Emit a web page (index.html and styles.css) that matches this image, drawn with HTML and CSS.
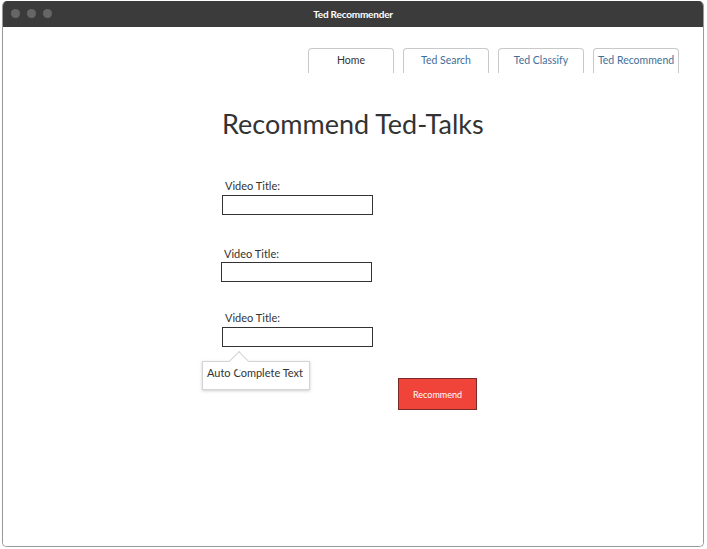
FILE: index.html
```html
<!DOCTYPE html>
<html>
<head>
<meta charset="utf-8">
<link rel="stylesheet" href="styles.css">
</head>
<body>
<div class="window">
  <div class="titlebar">
    <div class="dots"><span class="dot"></span><span class="dot"></span><span class="dot"></span></div>
    <div class="title">Ted Recommender</div>
  </div>
  <div class="content">
    <nav class="tabs">
      <div class="tab active">Home</div>
      <div class="tab">Ted Search</div>
      <div class="tab">Ted Classify</div>
      <div class="tab">Ted Recommend</div>
    </nav>
    <main class="form">
      <h1 class="heading">Recommend Ted-Talks</h1>
      <div class="field f1">
        <label class="label">Video Title:</label>
        <div class="input"></div>
      </div>
      <div class="field f2">
        <label class="label">Video Title:</label>
        <div class="input"></div>
      </div>
      <div class="field f3">
        <label class="label">Video Title:</label>
        <div class="input"></div>
        <div class="tooltip">Auto Complete Text</div>
      </div>
      <div class="actions">
        <button class="btn">Recommend</button>
      </div>
    </main>
  </div>
</div>
</body>
</html>
```

FILE: styles.css
```css
html, body {
  margin: 0;
  padding: 0;
  background: #ffffff;
}
body {
  font-family: "Lato", "Open Sans", sans-serif;
  color: #333;
}
.window {
  margin: 1px 3px 0 2px;
  width: 700px;
  height: 545px;
  border: 1px solid #9a9a9a;
  border-top: none;
  border-radius: 5px 5px 5px 5px;
  overflow: hidden;
  display: flex;
  flex-direction: column;
  box-shadow: 0 1px 1px rgba(0,0,0,0.15);
}
.titlebar {
  height: 26px;
  background: #3b3b3b;
  position: relative;
  display: flex;
  align-items: center;
  justify-content: center;
  flex-shrink: 0;
}
.dots {
  position: absolute;
  left: 8px;
  top: 8px;
  display: flex;
  gap: 7px;
}
.dot {
  width: 9px;
  height: 9px;
  border-radius: 50%;
  background: #666;
}
.title {
  color: #fff;
  font-size: 10px;
  font-weight: 700;
  letter-spacing: -0.2px;
}
.content {
  flex: 1;
  background: #fff;
}
.tabs {
  display: flex;
  justify-content: flex-end;
  gap: 9px;
  padding: 21px 24px 0 0;
}
.tab {
  width: 84px;
  height: 24px;
  border: 1px solid #c9c9c9;
  border-bottom: none;
  border-radius: 4px 4px 0 0;
  font-size: 10.5px;
  color: #3f6e9a;
  display: flex;
  align-items: flex-start;
  justify-content: center;
  padding-top: 0;
  line-height: 22px;
  box-sizing: content-box;
}
.tab.active {
  color: #333;
}
.form {
  padding-left: 219px;
  position: relative;
}
.heading {
  margin: 33px 0 0 0;
  font-size: 27px;
  font-weight: 400;
  color: #333;
  line-height: 36px;
  letter-spacing: 0;
}
.field {
  position: relative;
  display: flex;
  flex-direction: column;
  align-items: flex-start;
}
.f1 { margin-top: 37px; }
.f2 { margin-top: 32px; margin-left: -1px; }
.f3 { margin-top: 29px; }
.label {
  font-size: 11px;
  color: #333;
  margin-left: 3px;
  line-height: 14px;
  height: 15px;
}
.input {
  width: 149px;
  height: 18px;
  border: 1px solid #333;
  margin-top: 1px;
}
.f2 .input { margin-top: 0; }
.tooltip {
  position: absolute;
  left: -20px;
  top: 50px;
  width: 108px;
  height: 29px;
  box-sizing: border-box;
  border: 1px solid #d4d4d4;
  background: #fff;
  box-shadow: 0 1px 3px rgba(0,0,0,0.2);
  font-size: 11px;
  color: #333;
  padding: 4px 0 0 4px;
}
.tooltip::before {
  content: "";
  position: absolute;
  left: 29px;
  top: -8px;
  width: 13px;
  height: 13px;
  background: #fff;
  border-left: 1px solid #d4d4d4;
  border-top: 1px solid #d4d4d4;
  transform: rotate(45deg);
  transform-origin: center;
}
.actions {
  margin-top: 31px;
  padding-left: 176px;
}
.btn {
  width: 79px;
  height: 32px;
  background: #f0433a;
  border: 1px solid #7a2a26;
  color: #fff;
  font-family: "Lato", sans-serif;
  font-size: 9px;
  padding: 0;
}
```
